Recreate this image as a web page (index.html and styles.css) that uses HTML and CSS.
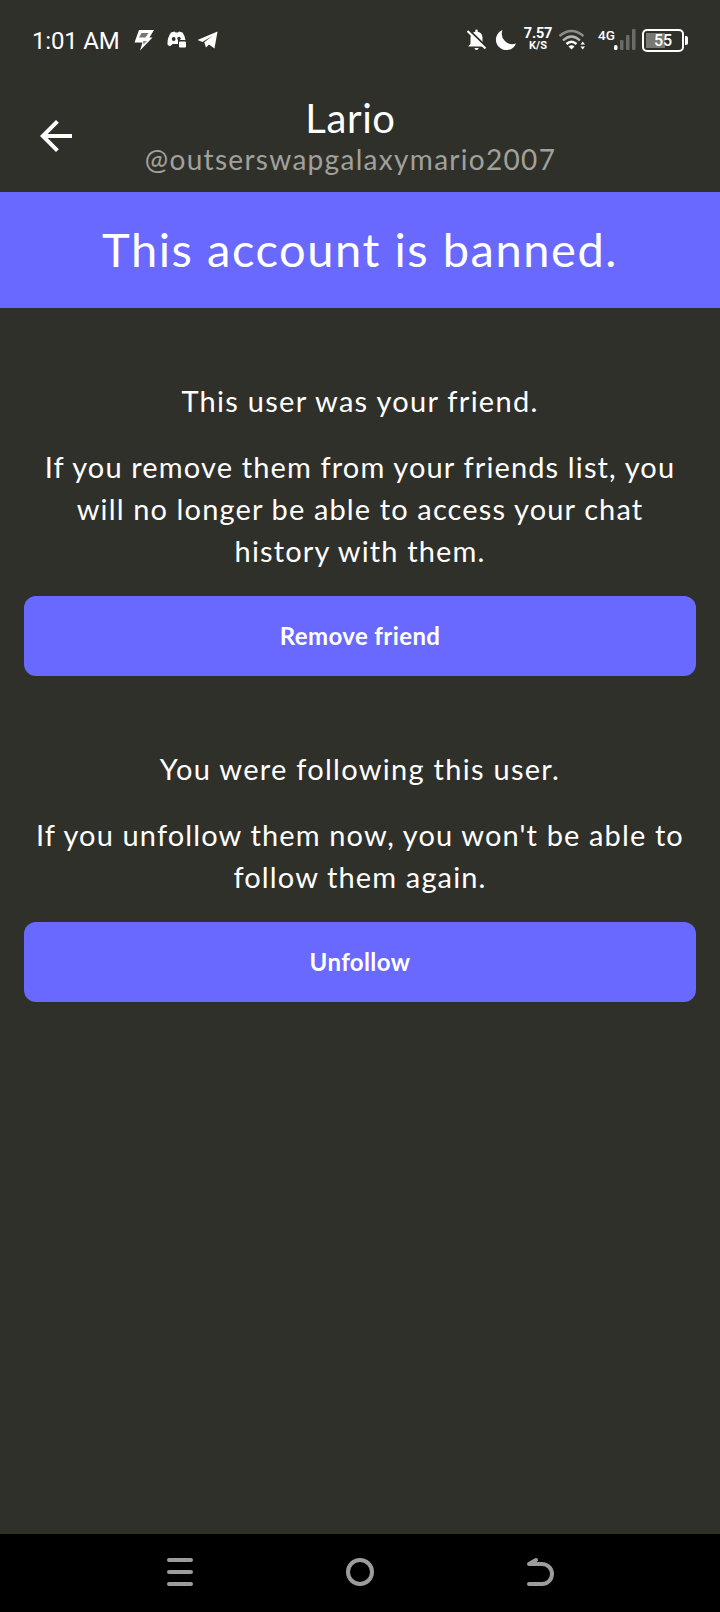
FILE: index.html
```html
<!DOCTYPE html>
<html lang="en">
<head>
  <meta charset="UTF-8" />
  <meta name="viewport" content="width=device-width, initial-scale=1.0"/>
  <title>Lario</title>
  <link rel="stylesheet" href="styles.css">
</head>
<body>
  <!-- Status bar -->
  <div class="status-bar">
    <span class="time">1:01 AM</span>
    <svg class="icon-bolt" width="24" height="24" viewBox="0 0 24 24">
      <path d="M7 2H22L17.500 9.500H20.500L8 22.500L10.500 14.500H2.500Z" fill="#fff"/>
      <path d="M9.500 5H16.500L13.500 9.500H7Z" fill="#777773"/>
      <path d="M11 13H15L11.500 16.500Z" fill="#8b8b88"/>
    </svg>
    <svg class="icon-discord" width="20" height="18" viewBox="0 0 20 18">
      <path d="M4 1.500L7.500 .5L8.500 1.500H11L12 .5L15.500 1.500Q18 5 18.500 9H11V13H5.500L3.500 15Q1.500 15 .5 13.500Q0 7 4 1.500Z" fill="#fff"/>
      <circle cx="6.700" cy="8" r="1.900" fill="#30302b"/>
      <circle cx="12" cy="7.500" r="1.700" fill="#30302b"/>
      <rect x="12" y="10.500" width="7" height="6" rx="1" fill="#fff"/>
    </svg>
    <svg class="icon-telegram" width="22" height="20" viewBox="0 0 22 20">
      <path d="M.5 10L20.500 1.500L17.500 18.500L12 14.500L9 17.500L7.500 13L16 5.500L5.500 12Z" fill="#fff"/>
      <path d="M7 12.500L16.500 5L9.500 13.500Z" fill="#fff"/>
    </svg>

    <div class="status-right">
      <svg class="icon-bell" width="20" height="22" viewBox="0 0 20 22">
        <path d="M3.500 15V9Q3.500 3.500 8.300 2.700V1.500Q8.300 .5 9.500 .5T10.700 1.500V2.700Q15.500 3.500 15.500 9V15L17.500 17V17.500H1.500V17Z" fill="#fff"/>
        <path d="M7.500 19H11.500Q11.500 21 9.500 21T7.500 19Z" fill="#fff"/>
        <path d="M2 1L20 18.500" stroke="#30302b" stroke-width="2"/>
        <path d="M.5 2L18.500 19.500" stroke="#fff" stroke-width="2"/>
      </svg>
      <svg class="icon-moon" width="22" height="22" viewBox="0 0 22 22">
        <path d="M7.500 1A10.400 10.400 0 1 0 21 14.500A10.500 10.500 0 0 1 7.500 1Z" fill="#fff"/>
      </svg>
      <div class="speed">
        <span class="speed-value">7.57</span>
        <span class="speed-unit">K/S</span>
      </div>
      <svg class="icon-wifi" width="27" height="22" viewBox="0 0 27 22">
        <g fill="none" stroke-width="2.400">
          <path d="M.5 7Q12.500 -3 24.500 7" stroke="#8b8b88"/>
          <path d="M4 11.500Q12.500 3.500 21 11.500" stroke="#b5b5b2"/>
          <path d="M7.500 15Q12.500 10.500 17.500 15" stroke="#fff"/>
        </g>
        <path d="M9.500 17.500Q12.500 15 15.500 17.500L12.500 20.500Z" fill="#fff"/>
        <path d="M21.500 15.500L23.700 12.500L26 15.500ZM21.500 17.500H26L23.700 20.500Z" fill="#fff"/>
      </svg>
      <div class="signal">
        <span class="network">4G</span>
        <svg width="22" height="22" viewBox="0 0 22 22">
          <rect x="0" y="16" width="3.500" height="5" rx="1.500" fill="#fff"/>
          <rect x="6" y="11" width="3.500" height="10" rx="1" fill="#6a6a66"/>
          <rect x="12" y="6" width="3.500" height="15" rx="1" fill="#6a6a66"/>
          <rect x="18" y="0" width="3.500" height="21" rx="1" fill="#6a6a66"/>
        </svg>
      </div>
      <div class="battery"><span>55</span></div>
    </div>
  </div>

  <header class="header">
    <svg class="back" width="48" height="48" viewBox="0 0 24 24">
      <path d="M20 11H7.830l5.590-5.590L12 4l-8 8 8 8 1.410-1.410L7.830 13H20v-2z" fill="#fff"/>
    </svg>
    <div class="title">
      <h1>Lario</h1>
      <p class="handle">@outserswapgalaxymario2007</p>
    </div>
  </header>

  <div class="banner">This account is banned.</div>

  <main>
    <section>
      <p class="lead">This user was your friend.</p>
      <p>If you remove them from your friends list, you<br>will no longer be able to access your chat<br>history with them.</p>
      <button class="button">Remove friend</button>
    </section>
    <section>
      <p class="lead">You were following this user.</p>
      <p>If you unfollow them now, you won't be able to<br>follow them again.</p>
      <button class="button">Unfollow</button>
    </section>
  </main>

  <!-- System navigation -->
  <nav class="nav-bar">
    <svg width="32" height="32" viewBox="0 0 32 32">
      <path d="M5 4H27M5 16H27M5 28H27"/>
    </svg>
    <svg width="32" height="32" viewBox="0 0 32 32">
      <circle cx="16" cy="16" r="12"/>
    </svg>
    <svg width="32" height="32" viewBox="0 0 32 32">
      <path d="M12 4L5 8H18A10 10 0 0 1 18 28H5"/>
    </svg>
  </nav>
</body>
</html>
```
FILE: styles.css
```css
* {
  box-sizing: border-box;
}
body {
  display: flex;
  flex-direction: column;
  height: 1612px;
  margin: 0;
  background-color: #30302b;
  color: #fff;
  font-family: Lato, sans-serif;
}
h1, p {
  margin: 0;
  font-weight: normal;
}
svg {
  display: block;
  flex: none;
}

.status-bar {
  display: flex;
  align-items: center;
  height: 80px;
  padding-left: 32px;
  padding-right: 32px;
  font-family: Roboto, sans-serif;
}
.time {
  width: 100px;
  padding-top: 2px;
  font-size: 24px;
  line-height: 28px;
  letter-spacing: -0.2px;
}
.icon-discord {
  margin-left: 11px;
}
.icon-telegram {
  margin-left: 10px;
}
.status-right {
  display: flex;
  align-items: center;
  margin-left: auto;
}
.icon-moon {
  margin-left: 8px;
}
.speed {
  display: flex;
  flex-direction: column;
  align-items: center;
  width: 30px;
  margin-left: 6px;
  font-weight: bold;
}
.speed-value {
  font-size: 14.5px;
  line-height: 12px;
  letter-spacing: -0.2px;
}
.speed-unit {
  font-size: 11px;
  line-height: 12px;
}
.icon-wifi {
  margin-left: 6px;
}
.signal {
  display: flex;
  margin-left: 12px;
}
.network {
  width: 16px;
  font-size: 13.5px;
  font-weight: 500;
  line-height: 12px;
}
.battery {
  position: relative;
  width: 42px;
  height: 23px;
  margin-left: 6px;
  margin-right: 4px;
  padding: 2px;
  border: 2px solid #fff;
  border-radius: 5px;
  background: linear-gradient(#777773, #777773) 2px 2px / 19px 15px no-repeat;
  font-size: 16px;
  font-weight: 500;
  line-height: 15px;
  text-align: center;
}
.battery::after {
  content: "";
  position: absolute;
  top: 5px;
  right: -6px;
  width: 3px;
  height: 9px;
  border-radius: 0 2px 2px 0;
  background: #fff;
}

.header {
  display: flex;
  align-items: center;
  height: 112px;
  padding: 0 32px;
}
.title {
  flex: 1;
  margin-right: 67px;
  text-align: center;
}
.title h1 {
  font-size: 40px;
  line-height: 44px;
  letter-spacing: 0.6px;
}
.handle {
  padding-top: 1px;
  color: #a1a19b;
  font-size: 28px;
  line-height: 36px;
  letter-spacing: 1.3px;
}

.banner {
  height: 116px;
  background-color: #6969ff;
  font-size: 47px;
  line-height: 114px;
  letter-spacing: 1.55px;
  text-align: center;
}

main {
  flex: 1;
  padding: 0 24px;
}
section {
  padding-top: 72px;
  font-size: 29px;
  line-height: 42px;
  letter-spacing: 1.13px;
  text-align: center;
  white-space: nowrap;
}
.lead {
  margin-bottom: 24px;
  letter-spacing: 1.28px;
}
.button {
  display: block;
  width: 100%;
  height: 80px;
  margin-top: 24px;
  padding: 0 0 2px;
  border: none;
  border-radius: 12px;
  background-color: #6969ff;
  color: #fff;
  font-family: inherit;
  font-size: 24px;
  font-weight: bold;
  letter-spacing: 0.4px;
}

.nav-bar {
  display: flex;
  justify-content: center;
  gap: 148px;
  height: 80px;
  padding-top: 22px;
  border-top: 2px solid #2f3118;
  background-color: #000;
}
.nav-bar svg {
  fill: none;
  stroke: #9c9c9c;
  stroke-width: 4;
  stroke-linecap: round;
  stroke-linejoin: round;
}
```
